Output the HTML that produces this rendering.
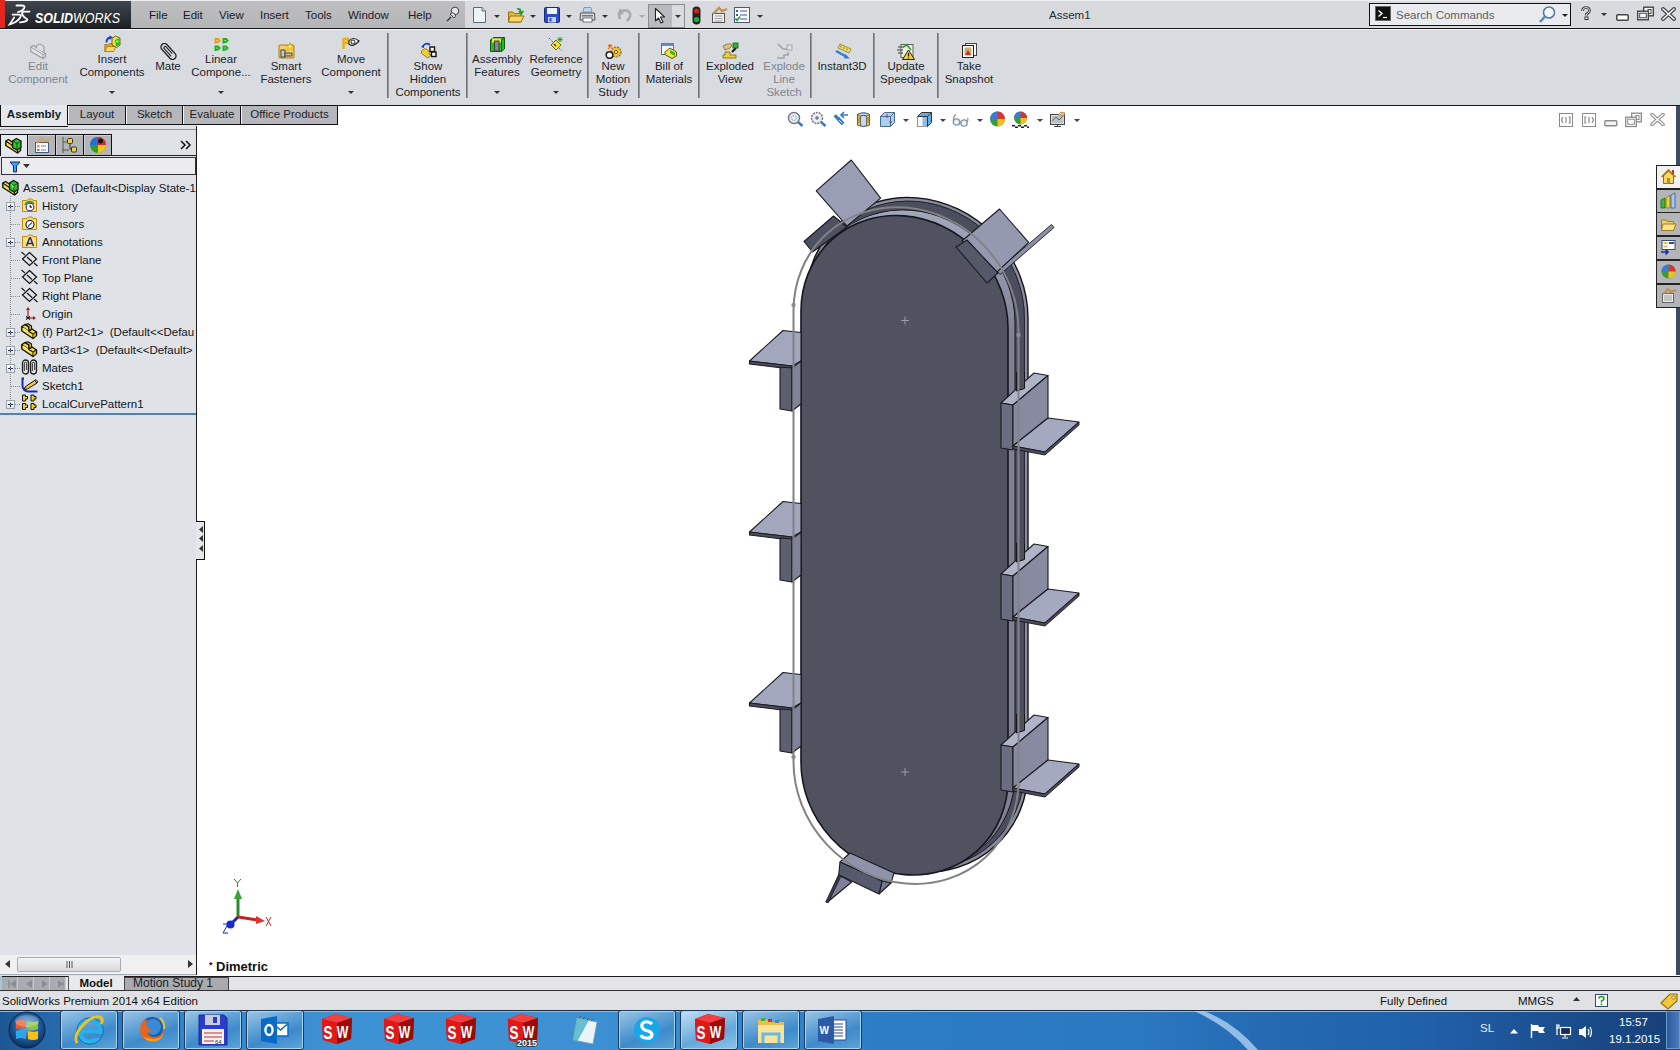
<!DOCTYPE html><html><head><meta charset="utf-8"><style>
html,body{margin:0;padding:0;}
body{width:1680px;height:1050px;position:relative;overflow:hidden;background:#d8dce1;font-family:"Liberation Sans",sans-serif;}
.b{position:absolute;}
.t{position:absolute;white-space:nowrap;line-height:14px;font-family:"Liberation Sans",sans-serif;}
</style></head><body>
<div class="b" style="left:0px;top:125px;width:197px;height:851px;background:#dfe3e8"></div>
<div class="b" style="left:197px;top:106px;width:1479px;height:870px;background:#ffffff"></div>
<div class="b" style="left:1676px;top:106px;width:4px;height:871px;background:#3d4b62"></div>
<div class="b" style="left:0px;top:0px;width:1680px;height:28px;background:#d8dadd"></div>
<div class="b" style="left:0px;top:0px;width:1680px;height:1px;background:#eff0f4"></div>
<div class="b" style="left:0px;top:27px;width:1680px;height:1px;background:#dcdde1"></div>
<div class="b" style="left:131px;top:1px;width:334px;height:27px;background:linear-gradient(#bfbfc1,#b4b5b7)"></div>
<div class="b" style="left:0px;top:0px;width:5px;height:28px;background:#e3261f"></div>
<div class="b" style="left:5px;top:1px;width:126px;height:27px;background:linear-gradient(#3f464e,#1e2226)"></div>
<div class="b" style="left:0px;top:28px;width:1680px;height:1px;background:#141414"></div>
<div class="b" style="left:0px;top:29px;width:1680px;height:1px;background:#f4f5f6"></div>
<div class="t" style="left:149px;top:8.02px;font-size:11.5px;color:#1a1a2a;font-weight:normal;">File</div>
<div class="t" style="left:183px;top:8.02px;font-size:11.5px;color:#1a1a2a;font-weight:normal;">Edit</div>
<div class="t" style="left:219px;top:8.02px;font-size:11.5px;color:#1a1a2a;font-weight:normal;">View</div>
<div class="t" style="left:260px;top:8.02px;font-size:11.5px;color:#1a1a2a;font-weight:normal;">Insert</div>
<div class="t" style="left:305px;top:8.02px;font-size:11.5px;color:#1a1a2a;font-weight:normal;">Tools</div>
<div class="t" style="left:348px;top:8.02px;font-size:11.5px;color:#1a1a2a;font-weight:normal;">Window</div>
<div class="t" style="left:408px;top:8.02px;font-size:11.5px;color:#1a1a2a;font-weight:normal;">Help</div>
<div class="t" style="left:1049px;top:8.02px;font-size:11.5px;color:#2a2a35;font-weight:normal;">Assem1</div>
<div class="b" style="left:1369px;top:3px;width:202px;height:23px;background:#e9ebee;border:1px solid #111;box-sizing:border-box"></div>
<div class="b" style="left:1375px;top:6px;width:16px;height:15px;background:#111;border:1px solid #666;box-sizing:border-box"></div>
<svg class="b" style="left:1377px;top:9px;" width="12" height="10" viewBox="0 0 12 10"><path d="M1.5 1.5L5 4.5L1.5 7.5" stroke="#fff" stroke-width="1.4" fill="none"/><path d="M6 8.5H10" stroke="#fff" stroke-width="1.2"/></svg>
<div class="t" style="left:1396px;top:8.02px;font-size:11.5px;color:#5b606b;font-weight:normal;">Search Commands</div>
<div class="b" style="left:0px;top:30px;width:1680px;height:75px;background:#d8dce1"></div>
<div class="t" style="left:-62px;width:200px;text-align:center;top:59.02px;font-size:11.5px;color:#80848c;font-weight:normal;">Edit</div>
<div class="t" style="left:-62px;width:200px;text-align:center;top:72.02px;font-size:11.5px;color:#80848c;font-weight:normal;">Component</div>
<div class="t" style="left:12px;width:200px;text-align:center;top:52.02px;font-size:11.5px;color:#1c1e2c;font-weight:normal;">Insert</div>
<div class="t" style="left:12px;width:200px;text-align:center;top:65.02px;font-size:11.5px;color:#1c1e2c;font-weight:normal;">Components</div>
<svg class="b" style="left:109px;top:91px;" width="6" height="3" viewBox="0 0 6 3"><path d="M0 0H6L3.0 3Z" fill="#333"/></svg>
<div class="t" style="left:68px;width:200px;text-align:center;top:59.02px;font-size:11.5px;color:#1c1e2c;font-weight:normal;">Mate</div>
<div class="t" style="left:121px;width:200px;text-align:center;top:52.02px;font-size:11.5px;color:#1c1e2c;font-weight:normal;">Linear</div>
<div class="t" style="left:121px;width:200px;text-align:center;top:65.02px;font-size:11.5px;color:#1c1e2c;font-weight:normal;">Compone...</div>
<svg class="b" style="left:218px;top:91px;" width="6" height="3" viewBox="0 0 6 3"><path d="M0 0H6L3.0 3Z" fill="#333"/></svg>
<div class="t" style="left:186px;width:200px;text-align:center;top:59.02px;font-size:11.5px;color:#1c1e2c;font-weight:normal;">Smart</div>
<div class="t" style="left:186px;width:200px;text-align:center;top:72.02px;font-size:11.5px;color:#1c1e2c;font-weight:normal;">Fasteners</div>
<div class="t" style="left:251px;width:200px;text-align:center;top:52.02px;font-size:11.5px;color:#1c1e2c;font-weight:normal;">Move</div>
<div class="t" style="left:251px;width:200px;text-align:center;top:65.02px;font-size:11.5px;color:#1c1e2c;font-weight:normal;">Component</div>
<svg class="b" style="left:348px;top:91px;" width="6" height="3" viewBox="0 0 6 3"><path d="M0 0H6L3.0 3Z" fill="#333"/></svg>
<div class="t" style="left:328px;width:200px;text-align:center;top:59.02px;font-size:11.5px;color:#1c1e2c;font-weight:normal;">Show</div>
<div class="t" style="left:328px;width:200px;text-align:center;top:72.02px;font-size:11.5px;color:#1c1e2c;font-weight:normal;">Hidden</div>
<div class="t" style="left:328px;width:200px;text-align:center;top:85.02px;font-size:11.5px;color:#1c1e2c;font-weight:normal;">Components</div>
<div class="t" style="left:397px;width:200px;text-align:center;top:52.02px;font-size:11.5px;color:#1c1e2c;font-weight:normal;">Assembly</div>
<div class="t" style="left:397px;width:200px;text-align:center;top:65.02px;font-size:11.5px;color:#1c1e2c;font-weight:normal;">Features</div>
<svg class="b" style="left:494px;top:91px;" width="6" height="3" viewBox="0 0 6 3"><path d="M0 0H6L3.0 3Z" fill="#333"/></svg>
<div class="t" style="left:456px;width:200px;text-align:center;top:52.02px;font-size:11.5px;color:#1c1e2c;font-weight:normal;">Reference</div>
<div class="t" style="left:456px;width:200px;text-align:center;top:65.02px;font-size:11.5px;color:#1c1e2c;font-weight:normal;">Geometry</div>
<svg class="b" style="left:553px;top:91px;" width="6" height="3" viewBox="0 0 6 3"><path d="M0 0H6L3.0 3Z" fill="#333"/></svg>
<div class="t" style="left:513px;width:200px;text-align:center;top:59.02px;font-size:11.5px;color:#1c1e2c;font-weight:normal;">New</div>
<div class="t" style="left:513px;width:200px;text-align:center;top:72.02px;font-size:11.5px;color:#1c1e2c;font-weight:normal;">Motion</div>
<div class="t" style="left:513px;width:200px;text-align:center;top:85.02px;font-size:11.5px;color:#1c1e2c;font-weight:normal;">Study</div>
<div class="t" style="left:569px;width:200px;text-align:center;top:59.02px;font-size:11.5px;color:#1c1e2c;font-weight:normal;">Bill of</div>
<div class="t" style="left:569px;width:200px;text-align:center;top:72.02px;font-size:11.5px;color:#1c1e2c;font-weight:normal;">Materials</div>
<div class="t" style="left:630px;width:200px;text-align:center;top:59.02px;font-size:11.5px;color:#1c1e2c;font-weight:normal;">Exploded</div>
<div class="t" style="left:630px;width:200px;text-align:center;top:72.02px;font-size:11.5px;color:#1c1e2c;font-weight:normal;">View</div>
<div class="t" style="left:684px;width:200px;text-align:center;top:59.02px;font-size:11.5px;color:#80848c;font-weight:normal;">Explode</div>
<div class="t" style="left:684px;width:200px;text-align:center;top:72.02px;font-size:11.5px;color:#80848c;font-weight:normal;">Line</div>
<div class="t" style="left:684px;width:200px;text-align:center;top:85.02px;font-size:11.5px;color:#80848c;font-weight:normal;">Sketch</div>
<div class="t" style="left:742px;width:200px;text-align:center;top:59.02px;font-size:11.5px;color:#1c1e2c;font-weight:normal;">Instant3D</div>
<div class="t" style="left:806px;width:200px;text-align:center;top:59.02px;font-size:11.5px;color:#1c1e2c;font-weight:normal;">Update</div>
<div class="t" style="left:806px;width:200px;text-align:center;top:72.02px;font-size:11.5px;color:#1c1e2c;font-weight:normal;">Speedpak</div>
<div class="t" style="left:869px;width:200px;text-align:center;top:59.02px;font-size:11.5px;color:#1c1e2c;font-weight:normal;">Take</div>
<div class="t" style="left:869px;width:200px;text-align:center;top:72.02px;font-size:11.5px;color:#1c1e2c;font-weight:normal;">Snapshot</div>
<div class="b" style="left:387px;top:33px;width:2px;height:65px;background:linear-gradient(90deg,#5c6066,#a9adb3)"></div>
<div class="b" style="left:466px;top:33px;width:2px;height:65px;background:linear-gradient(90deg,#5c6066,#a9adb3)"></div>
<div class="b" style="left:587px;top:33px;width:2px;height:65px;background:linear-gradient(90deg,#5c6066,#a9adb3)"></div>
<div class="b" style="left:638px;top:33px;width:2px;height:65px;background:linear-gradient(90deg,#5c6066,#a9adb3)"></div>
<div class="b" style="left:698px;top:33px;width:2px;height:65px;background:linear-gradient(90deg,#5c6066,#a9adb3)"></div>
<div class="b" style="left:810px;top:33px;width:2px;height:65px;background:linear-gradient(90deg,#5c6066,#a9adb3)"></div>
<div class="b" style="left:873px;top:33px;width:2px;height:65px;background:linear-gradient(90deg,#5c6066,#a9adb3)"></div>
<div class="b" style="left:937px;top:33px;width:2px;height:65px;background:linear-gradient(90deg,#5c6066,#a9adb3)"></div>
<div class="b" style="left:0px;top:105px;width:1680px;height:1px;background:#15161c"></div>
<div class="b" style="left:0px;top:105px;width:68px;height:22px;background:#e4e7eb;border-left:1px solid #111;border-bottom:1px solid #111;box-sizing:border-box"></div>
<div class="b" style="left:67px;top:105px;width:59px;height:20px;background:#b6b7bb;border:1px solid #111;box-sizing:border-box;box-shadow:inset 1px 0 0 #f4f4f4"></div>
<div class="t" style="left:-3.0px;width:200px;text-align:center;top:107.02px;font-size:11.5px;color:#1c1e2c;font-weight:normal;">Layout</div>
<div class="b" style="left:125px;top:105px;width:58px;height:20px;background:#b6b7bb;border:1px solid #111;box-sizing:border-box;box-shadow:inset 1px 0 0 #f4f4f4"></div>
<div class="t" style="left:54.5px;width:200px;text-align:center;top:107.02px;font-size:11.5px;color:#1c1e2c;font-weight:normal;">Sketch</div>
<div class="b" style="left:182px;top:105px;width:59px;height:20px;background:#b6b7bb;border:1px solid #111;box-sizing:border-box;box-shadow:inset 1px 0 0 #f4f4f4"></div>
<div class="t" style="left:112.0px;width:200px;text-align:center;top:107.02px;font-size:11.5px;color:#1c1e2c;font-weight:normal;">Evaluate</div>
<div class="b" style="left:240px;top:105px;width:98px;height:20px;background:#b6b7bb;border:1px solid #111;box-sizing:border-box;box-shadow:inset 1px 0 0 #f4f4f4"></div>
<div class="t" style="left:189.5px;width:200px;text-align:center;top:107.02px;font-size:11.5px;color:#1c1e2c;font-weight:normal;">Office Products</div>
<div class="t" style="left:-66px;width:200px;text-align:center;top:107.02px;font-size:11.5px;color:#111827;font-weight:bold;">Assembly</div>
<div class="b" style="left:0px;top:975px;width:1680px;height:16px;background:#dfe2e6"></div>
<div class="b" style="left:0px;top:991px;width:1680px;height:19px;background:#dde0e4"></div>
<div class="b" style="left:0px;top:1010px;width:1680px;height:40px;background:linear-gradient(90deg,#1a5b9a,#2a74bb 40%,#2068ae 70%,#1c5a9c)"></div>
<div class="b" style="left:196px;top:126px;width:1px;height:850px;background:#1a1a1a"></div>
<div class="b" style="left:0px;top:129px;width:196px;height:1px;background:#8e96a2"></div>
<div class="b" style="left:0px;top:134px;width:28px;height:22px;background:#e5e8ec;border-left:1px solid #111;border-top:1px solid #111;border-right:1px solid #111;box-sizing:border-box"></div>
<div class="b" style="left:27px;top:134px;width:29px;height:22px;background:#b3b5b9;border:1px solid #111;box-sizing:border-box;box-shadow:inset 1px 1px 0 #cfd1d4"></div>
<div class="b" style="left:55px;top:134px;width:29px;height:22px;background:#b3b5b9;border:1px solid #111;box-sizing:border-box;box-shadow:inset 1px 1px 0 #cfd1d4"></div>
<div class="b" style="left:83px;top:134px;width:29px;height:22px;background:#b3b5b9;border:1px solid #111;box-sizing:border-box;box-shadow:inset 1px 1px 0 #cfd1d4"></div>
<div class="b" style="left:111px;top:155px;width:85px;height:1px;background:#222"></div>
<div class="b" style="left:27px;top:155px;width:1px;height:1px;background:#222"></div>
<svg class="b" style="left:180px;top:140px;" width="12" height="10" viewBox="0 0 12 10"><path d="M1 1L5 5L1 9M6 1L10 5L6 9" stroke="#111" stroke-width="1.5" fill="none"/></svg>
<div class="b" style="left:1px;top:157px;width:195px;height:18px;background:#ececee;border:1px solid #333;box-sizing:border-box"></div>
<svg class="b" style="left:9px;top:161px;" width="12" height="12" viewBox="0 0 12 12"><path d="M1 1H11L7.5 5V11H4.5V5Z" fill="#3fa0ec" stroke="#0c2a8a" stroke-width="1"/></svg>
<svg class="b" style="left:23px;top:164px;" width="8" height="5" viewBox="0 0 8 5"><path d="M0 0H7L3.5 4Z" fill="#333"/></svg>
<div class="b" style="left:0px;top:176px;width:196px;height:779px;background:#dfe3e8"></div>
<div class="t" style="left:23px;top:181.02px;font-size:11.5px;color:#111420;font-weight:normal;width:173px;overflow:hidden">Assem1&nbsp; (Default&lt;Display State-1</div>
<svg class="b" style="left:2px;top:179px;" width="17" height="17" viewBox="0 0 17 17"><path d="M0.8 4L3.5 2.5L15.5 10.5V13.5L12.5 16L0.8 8.5Z" fill="#f6e040" stroke="#111" stroke-width="1.4" stroke-linejoin="round"/><path d="M0.8 4L12.5 12V16" stroke="#111" stroke-width="1.1" fill="none"/><path d="M7.5 4L11.5 1.5L16 4V10.5L12 13L7.5 10.5Z" fill="#2ec42e" stroke="#111" stroke-width="1.3" stroke-linejoin="round"/><path d="M7.5 4L12 6.5L16 4M12 6.5V13" stroke="#0a4a0a" stroke-width="0.9" fill="none"/><path d="M9 5.5L11 6.8V9" stroke="#9af09a" stroke-width="1" fill="none"/></svg>
<div class="t" style="left:42px;top:199.02px;font-size:11.5px;color:#111420;font-weight:normal;width:154px;overflow:hidden">History</div>
<div class="b" style="left:6px;top:202px;width:9px;height:9px;background:linear-gradient(#fff,#dfe2e6);border:1px solid #9aa0a8;box-sizing:border-box"></div>
<svg class="b" style="left:6px;top:202px;" width="9" height="9" viewBox="0 0 9 9"><path d="M2 4.5H7M4.5 2V7" stroke="#1b2a6a" stroke-width="1"/></svg>
<div class="b" style="left:15px;top:206px;width:6px;height:1px;background:repeating-linear-gradient(90deg,#8a8f96 0 1px,transparent 1px 2px)"></div>
<div class="t" style="left:42px;top:217.02px;font-size:11.5px;color:#111420;font-weight:normal;width:154px;overflow:hidden">Sensors</div>
<div class="b" style="left:11px;top:224px;width:10px;height:1px;background:repeating-linear-gradient(90deg,#8a8f96 0 1px,transparent 1px 2px)"></div>
<div class="t" style="left:42px;top:235.02px;font-size:11.5px;color:#111420;font-weight:normal;width:154px;overflow:hidden">Annotations</div>
<div class="b" style="left:6px;top:238px;width:9px;height:9px;background:linear-gradient(#fff,#dfe2e6);border:1px solid #9aa0a8;box-sizing:border-box"></div>
<svg class="b" style="left:6px;top:238px;" width="9" height="9" viewBox="0 0 9 9"><path d="M2 4.5H7M4.5 2V7" stroke="#1b2a6a" stroke-width="1"/></svg>
<div class="b" style="left:15px;top:242px;width:6px;height:1px;background:repeating-linear-gradient(90deg,#8a8f96 0 1px,transparent 1px 2px)"></div>
<div class="t" style="left:42px;top:253.02px;font-size:11.5px;color:#111420;font-weight:normal;width:154px;overflow:hidden">Front Plane</div>
<div class="b" style="left:11px;top:260px;width:10px;height:1px;background:repeating-linear-gradient(90deg,#8a8f96 0 1px,transparent 1px 2px)"></div>
<div class="t" style="left:42px;top:271.02px;font-size:11.5px;color:#111420;font-weight:normal;width:154px;overflow:hidden">Top Plane</div>
<div class="b" style="left:11px;top:278px;width:10px;height:1px;background:repeating-linear-gradient(90deg,#8a8f96 0 1px,transparent 1px 2px)"></div>
<div class="t" style="left:42px;top:289.02px;font-size:11.5px;color:#111420;font-weight:normal;width:154px;overflow:hidden">Right Plane</div>
<div class="b" style="left:11px;top:296px;width:10px;height:1px;background:repeating-linear-gradient(90deg,#8a8f96 0 1px,transparent 1px 2px)"></div>
<div class="t" style="left:42px;top:307.02px;font-size:11.5px;color:#111420;font-weight:normal;width:154px;overflow:hidden">Origin</div>
<div class="b" style="left:11px;top:314px;width:10px;height:1px;background:repeating-linear-gradient(90deg,#8a8f96 0 1px,transparent 1px 2px)"></div>
<div class="t" style="left:42px;top:325.02px;font-size:11.5px;color:#111420;font-weight:normal;width:154px;overflow:hidden">(f) Part2&lt;1&gt;&nbsp; (Default&lt;&lt;Defau</div>
<div class="b" style="left:6px;top:328px;width:9px;height:9px;background:linear-gradient(#fff,#dfe2e6);border:1px solid #9aa0a8;box-sizing:border-box"></div>
<svg class="b" style="left:6px;top:328px;" width="9" height="9" viewBox="0 0 9 9"><path d="M2 4.5H7M4.5 2V7" stroke="#1b2a6a" stroke-width="1"/></svg>
<div class="b" style="left:15px;top:332px;width:6px;height:1px;background:repeating-linear-gradient(90deg,#8a8f96 0 1px,transparent 1px 2px)"></div>
<div class="t" style="left:42px;top:343.02px;font-size:11.5px;color:#111420;font-weight:normal;width:154px;overflow:hidden">Part3&lt;1&gt;&nbsp; (Default&lt;&lt;Default&gt;</div>
<div class="b" style="left:6px;top:346px;width:9px;height:9px;background:linear-gradient(#fff,#dfe2e6);border:1px solid #9aa0a8;box-sizing:border-box"></div>
<svg class="b" style="left:6px;top:346px;" width="9" height="9" viewBox="0 0 9 9"><path d="M2 4.5H7M4.5 2V7" stroke="#1b2a6a" stroke-width="1"/></svg>
<div class="b" style="left:15px;top:350px;width:6px;height:1px;background:repeating-linear-gradient(90deg,#8a8f96 0 1px,transparent 1px 2px)"></div>
<div class="t" style="left:42px;top:361.02px;font-size:11.5px;color:#111420;font-weight:normal;width:154px;overflow:hidden">Mates</div>
<div class="b" style="left:6px;top:364px;width:9px;height:9px;background:linear-gradient(#fff,#dfe2e6);border:1px solid #9aa0a8;box-sizing:border-box"></div>
<svg class="b" style="left:6px;top:364px;" width="9" height="9" viewBox="0 0 9 9"><path d="M2 4.5H7M4.5 2V7" stroke="#1b2a6a" stroke-width="1"/></svg>
<div class="b" style="left:15px;top:368px;width:6px;height:1px;background:repeating-linear-gradient(90deg,#8a8f96 0 1px,transparent 1px 2px)"></div>
<div class="t" style="left:42px;top:379.02px;font-size:11.5px;color:#111420;font-weight:normal;width:154px;overflow:hidden">Sketch1</div>
<div class="b" style="left:11px;top:386px;width:10px;height:1px;background:repeating-linear-gradient(90deg,#8a8f96 0 1px,transparent 1px 2px)"></div>
<div class="t" style="left:42px;top:397.02px;font-size:11.5px;color:#111420;font-weight:normal;width:154px;overflow:hidden">LocalCurvePattern1</div>
<div class="b" style="left:6px;top:400px;width:9px;height:9px;background:linear-gradient(#fff,#dfe2e6);border:1px solid #9aa0a8;box-sizing:border-box"></div>
<svg class="b" style="left:6px;top:400px;" width="9" height="9" viewBox="0 0 9 9"><path d="M2 4.5H7M4.5 2V7" stroke="#1b2a6a" stroke-width="1"/></svg>
<div class="b" style="left:15px;top:404px;width:6px;height:1px;background:repeating-linear-gradient(90deg,#8a8f96 0 1px,transparent 1px 2px)"></div>
<div class="b" style="left:10px;top:196px;width:1px;height:209px;background:repeating-linear-gradient(#8a8f96 0 1px,transparent 1px 2px)"></div>
<svg class="b" style="left:21px;top:197px;" width="17" height="16" viewBox="0 0 17 16"><path d="M1.5 3.5H6L7.5 2H11L12 3.5H15.5V14.5H1.5Z" fill="#f6d865" stroke="#c08a14" stroke-width="1"/><rect x="2" y="5" width="13" height="9" fill="#fbe27a"/><path d="M4 8A5 5 0 0 1 13 7" stroke="#2aa02a" stroke-width="1.6" fill="none"/><circle cx="9" cy="10" r="3.8" fill="#fff" stroke="#3a3aa0" stroke-width="1.2"/><path d="M9 8V10.3H11" stroke="#c01818" stroke-width="1"/></svg>
<svg class="b" style="left:21px;top:215px;" width="17" height="16" viewBox="0 0 17 16"><path d="M1.5 3.5H6L7.5 2H11L12 3.5H15.5V14.5H1.5Z" fill="#f6d865" stroke="#c08a14" stroke-width="1"/><rect x="2" y="5" width="13" height="9" fill="#fbe27a"/><circle cx="9" cy="9.5" r="4" fill="#fff" stroke="#111" stroke-width="1.1"/><path d="M7 11.5L11 7.5" stroke="#2a5ad0" stroke-width="1.2"/></svg>
<svg class="b" style="left:21px;top:233px;" width="17" height="16" viewBox="0 0 17 16"><path d="M1.5 3.5H6L7.5 2H11L12 3.5H15.5V14.5H1.5Z" fill="#f6d865" stroke="#c08a14" stroke-width="1"/><rect x="2" y="5" width="13" height="9" fill="#fbe27a"/><path d="M5.5 13L8.5 5H9.5L12.5 13M6.7 10.5H11.3" stroke="#1a2a9a" stroke-width="1.5" fill="none"/></svg>
<svg class="b" style="left:21px;top:251px;" width="17" height="16" viewBox="0 0 17 16"><path d="M8.5 1.5L15.5 8L8.5 14.5L1.5 8Z" fill="none" stroke="#111" stroke-width="1.2"/><path d="M0.5 1L4 4.2M6 6L11 10.5M13 12L16.5 15" stroke="#111" stroke-width="1.1"/></svg>
<svg class="b" style="left:21px;top:269px;" width="17" height="16" viewBox="0 0 17 16"><path d="M8.5 1.5L15.5 8L8.5 14.5L1.5 8Z" fill="none" stroke="#111" stroke-width="1.2"/><path d="M0.5 1L4 4.2M6 6L11 10.5M13 12L16.5 15" stroke="#111" stroke-width="1.1"/></svg>
<svg class="b" style="left:21px;top:287px;" width="17" height="16" viewBox="0 0 17 16"><path d="M8.5 1.5L15.5 8L8.5 14.5L1.5 8Z" fill="none" stroke="#111" stroke-width="1.2"/><path d="M0.5 1L4 4.2M6 6L11 10.5M13 12L16.5 15" stroke="#111" stroke-width="1.1"/></svg>
<svg class="b" style="left:21px;top:305px;" width="17" height="16" viewBox="0 0 17 16"><path d="M7 14V3" stroke="#b01818" stroke-width="1.2"/><path d="M5 5L7 2L9 5Z" fill="#b01818"/><path d="M7 13H14" stroke="#b01818" stroke-width="1.2"/><path d="M12 11L15 13L12 15Z" fill="#b01818"/><path d="M5 11L9 15M9 11L5 15M5 13H9" stroke="#111" stroke-width="0.9"/></svg>
<svg class="b" style="left:21px;top:323px;" width="17" height="17" viewBox="0 0 17 17"><path d="M0.8 3.5L4 1.5L8 4V7.5L11 6L15.5 9V12.5L12 15.5L0.8 8Z" fill="#f6e040" stroke="#111" stroke-width="1.4" stroke-linejoin="round"/><path d="M0.8 3.5L8 8.5V7.5M8 8.5L12 11V15.5M12 11L15.5 9M4 1.5L8 4" stroke="#111" stroke-width="1.1" fill="none"/><path d="M4 1.5L7 0.8L10.5 3V6.5L8 7.5V4Z" fill="#e8c020" stroke="#111" stroke-width="1.1" stroke-linejoin="round"/><path d="M2 5L7 8.5" stroke="#fff8a0" stroke-width="1.1"/><path d="M12.5 11.5V14.5L15 12.5V10Z" fill="#d8b010"/></svg>
<svg class="b" style="left:21px;top:341px;" width="17" height="17" viewBox="0 0 17 17"><path d="M0.8 3.5L4 1.5L8 4V7.5L11 6L15.5 9V12.5L12 15.5L0.8 8Z" fill="#f6e040" stroke="#111" stroke-width="1.4" stroke-linejoin="round"/><path d="M0.8 3.5L8 8.5V7.5M8 8.5L12 11V15.5M12 11L15.5 9M4 1.5L8 4" stroke="#111" stroke-width="1.1" fill="none"/><path d="M4 1.5L7 0.8L10.5 3V6.5L8 7.5V4Z" fill="#e8c020" stroke="#111" stroke-width="1.1" stroke-linejoin="round"/><path d="M2 5L7 8.5" stroke="#fff8a0" stroke-width="1.1"/><path d="M12.5 11.5V14.5L15 12.5V10Z" fill="#d8b010"/></svg>
<svg class="b" style="left:21px;top:359px;" width="17" height="16" viewBox="0 0 17 16"><rect x="1.5" y="1" width="6" height="14" rx="3" fill="none" stroke="#222" stroke-width="1.3"/><path d="M3.3 12V4.5A1.2 1.2 0 0 1 5.7 4.5V11" stroke="#222" stroke-width="1" fill="none"/><rect x="9.5" y="1" width="6" height="14" rx="3" fill="none" stroke="#222" stroke-width="1.3"/><path d="M11.3 12V4.5A1.2 1.2 0 0 1 13.7 4.5V11" stroke="#222" stroke-width="1" fill="none"/></svg>
<svg class="b" style="left:21px;top:376px;" width="18" height="17" viewBox="0 0 18 17"><path d="M3 2.5H1.5V10A5.5 5.5 0 0 0 7 15.5H16.5" stroke="#1b2ab0" stroke-width="2" fill="none"/><path d="M4 11L13.5 4.5L16 7L6.5 13L3.5 13.5Z" fill="#f2c53a" stroke="#111" stroke-width="1"/><path d="M13.5 4.5L15 3.5L17 6L16 7Z" fill="#e08080" stroke="#111" stroke-width="0.8"/></svg>
<svg class="b" style="left:21px;top:394px;" width="17" height="18" viewBox="0 0 17 18"><g fill="#f2d020" stroke="#111" stroke-width="1"><path d="M1.5 1H4.5V2.5H6.5V5H4.5V7H1.5Z"/><path d="M10 1H13V2.5H15V5H13V7H10Z"/><path d="M1.5 9.5H4.5V11H6.5V13.5H4.5V15.5H1.5Z"/><path d="M10 9.5H13V11H15V13.5H13V15.5H10Z"/></g></svg>
<div class="b" style="left:0px;top:413px;width:196px;height:2px;background:#4a82c6"></div>
<div class="b" style="left:0px;top:955px;width:196px;height:19px;background:#f0f0f1"></div>
<div class="b" style="left:17px;top:957px;width:104px;height:15px;background:linear-gradient(#f4f4f4,#d9dadc);border:1px solid #a8abb0;border-radius:2px;box-sizing:border-box"></div>
<svg class="b" style="left:66px;top:961px;" width="7" height="7" viewBox="0 0 7 7"><path d="M1 0V7M3.5 0V7M6 0V7" stroke="#555" stroke-width="1"/></svg>
<svg class="b" style="left:5px;top:960px;" width="5" height="8" viewBox="0 0 5 8"><path d="M5 0V8L0 4Z" fill="#333"/></svg>
<svg class="b" style="left:188px;top:960px;" width="5" height="8" viewBox="0 0 5 8"><path d="M0 0V8L5 4Z" fill="#333"/></svg>
<div class="b" style="left:196px;top:521px;width:9px;height:39px;background:#e4e7eb;border:1px solid #111;border-left:none;box-sizing:border-box"></div>
<svg class="b" style="left:199px;top:526px;" width="4" height="7" viewBox="0 0 4 7"><path d="M4 0V7L0 3.5Z" fill="#333"/></svg>
<svg class="b" style="left:199px;top:535px;" width="4" height="7" viewBox="0 0 4 7"><path d="M4 0V7L0 3.5Z" fill="#333"/></svg>
<svg class="b" style="left:199px;top:545px;" width="4" height="7" viewBox="0 0 4 7"><path d="M4 0V7L0 3.5Z" fill="#333"/></svg>
<svg class="b" style="left:700px;top:140px;" width="420" height="780" viewBox="0 0 420 780"><g transform="translate(-700,-140)"><defs><linearGradient id="lb" gradientUnits="userSpaceOnUse" x1="0" y1="205" x2="0" y2="330"><stop offset="0" stop-color="#a4a8bd"/><stop offset="1" stop-color="#7d8193"/></linearGradient></defs><g transform="translate(904.5,0) skewY(4.716) translate(-904.5,0)"><path d="M806.0 307.8A111 111 0 0 1 1028.0 307.8L1028.0 759.7A111 111 0 0 1 806.0 759.7Z" fill="#4b4e5e" stroke="#15151c" stroke-width="1.4"/><path d="M808.0 307.8A109 109 0 0 1 1026.0 307.8L1026.0 759.7A109 109 0 0 1 808.0 759.7Z" fill="none" stroke="#8a8c9a" stroke-width="2.4"/><path d="M809.6 307.8A107.4 107.4 0 0 1 1024.4 307.8L1024.4 759.7A107.4 107.4 0 0 1 809.6 759.7Z" fill="none" stroke="#1e1f28" stroke-width="0.9"/><path d="M808.0 313.2A103.5 103.5 0 0 1 1015.0 313.2L1015.0 765.1A103.5 103.5 0 0 1 808.0 765.1Z" fill="url(#lb)" stroke="#15151c" stroke-width="1"/><path d="M807.0 314.07142857142856A103.5 103.5 0 0 1 1014.0 314.07142857142856L1014.0 765.9714285714286A103.5 103.5 0 0 1 807.0 765.9714285714286Z" fill="url(#lb)" stroke="none" stroke-width="1"/><path d="M806.0 314.9428571428572A103.5 103.5 0 0 1 1013.0 314.9428571428572L1013.0 766.8428571428572A103.5 103.5 0 0 1 806.0 766.8428571428572Z" fill="url(#lb)" stroke="none" stroke-width="1"/><path d="M805.0 315.81428571428575A103.5 103.5 0 0 1 1012.0 315.81428571428575L1012.0 767.7142857142858A103.5 103.5 0 0 1 805.0 767.7142857142858Z" fill="url(#lb)" stroke="none" stroke-width="1"/><path d="M804.0 316.6857142857143A103.5 103.5 0 0 1 1011.0 316.6857142857143L1011.0 768.5857142857143A103.5 103.5 0 0 1 804.0 768.5857142857143Z" fill="url(#lb)" stroke="none" stroke-width="1"/><path d="M803.0 317.5571428571429A103.5 103.5 0 0 1 1010.0 317.5571428571429L1010.0 769.4571428571429A103.5 103.5 0 0 1 803.0 769.4571428571429Z" fill="url(#lb)" stroke="none" stroke-width="1"/><path d="M802.0 318.42857142857144A103.5 103.5 0 0 1 1009.0 318.42857142857144L1009.0 770.3285714285714A103.5 103.5 0 0 1 802.0 770.3285714285714Z" fill="url(#lb)" stroke="none" stroke-width="1"/><path d="M801.0 319.3A103.5 103.5 0 0 1 1008.0 319.3L1008.0 771.2A103.5 103.5 0 0 1 801.0 771.2Z" fill="#50535f" stroke="#15151c" stroke-width="1.6"/></g><path d="M901.0 320.5H909.0M905.0 316.5V324.5" stroke="#9a9ca8" stroke-width="1"/><path d="M901.0 772.0H909.0M905.0 768.0V776.0" stroke="#9a9ca8" stroke-width="1"/><path d="M749.5 361 L783 330.5 L801 332.5 L801 361 L792 366Z" fill="#a3a7be" stroke="#1a1a22" stroke-width="1.1" stroke-linejoin="round"/><path d="M749.5 361 L792 366 L792 369 L782 368 L749.5 364Z" fill="#4a4d5a" stroke="#1a1a22" stroke-width="1.1" stroke-linejoin="round"/><path d="M780 367 L792 368 L792 411 L780 409Z" fill="#5c5f6e" stroke="#1a1a22" stroke-width="1.1" stroke-linejoin="round"/><path d="M792 368 L801 361 L801 404 L792 411Z" fill="#7f8398" stroke="#1a1a22" stroke-width="1.1" stroke-linejoin="round"/><path d="M749.5 532 L783 501.5 L801 503.5 L801 532 L792 537Z" fill="#a3a7be" stroke="#1a1a22" stroke-width="1.1" stroke-linejoin="round"/><path d="M749.5 532 L792 537 L792 540 L782 539 L749.5 535Z" fill="#4a4d5a" stroke="#1a1a22" stroke-width="1.1" stroke-linejoin="round"/><path d="M780 538 L792 539 L792 582 L780 580Z" fill="#5c5f6e" stroke="#1a1a22" stroke-width="1.1" stroke-linejoin="round"/><path d="M792 539 L801 532 L801 575 L792 582Z" fill="#7f8398" stroke="#1a1a22" stroke-width="1.1" stroke-linejoin="round"/><path d="M749.5 703 L783 672.5 L801 674.5 L801 703 L792 708Z" fill="#a3a7be" stroke="#1a1a22" stroke-width="1.1" stroke-linejoin="round"/><path d="M749.5 703 L792 708 L792 711 L782 710 L749.5 706Z" fill="#4a4d5a" stroke="#1a1a22" stroke-width="1.1" stroke-linejoin="round"/><path d="M780 709 L792 710 L792 753 L780 751Z" fill="#5c5f6e" stroke="#1a1a22" stroke-width="1.1" stroke-linejoin="round"/><path d="M792 710 L801 703 L801 746 L792 753Z" fill="#7f8398" stroke="#1a1a22" stroke-width="1.1" stroke-linejoin="round"/><path d="M1001 403 L1034 373 L1048 375.5 L1013 405Z" fill="#b0b4c8" stroke="#1a1a22" stroke-width="1.1" stroke-linejoin="round"/><path d="M1001 403 L1013 405 L1013 450 L1001 448Z" fill="#6a6d7f" stroke="#1a1a22" stroke-width="1.1" stroke-linejoin="round"/><path d="M1013 405 L1048 375.5 L1048 418 L1019 441 L1013 446Z" fill="#878aa0" stroke="#1a1a22" stroke-width="1.1" stroke-linejoin="round"/><path d="M1013 446 L1048 418 L1079 422 L1045 452Z" fill="#a5a9c0" stroke="#1a1a22" stroke-width="1.1" stroke-linejoin="round"/><path d="M1013 446 L1045 452 L1079 422 L1079 425 L1045 455 L1013 449Z" fill="#4a4d5a" stroke="#1a1a22" stroke-width="0.9" stroke-linejoin="round"/><path d="M1017 372V391L1024.5 388.5V372Z" fill="#4e505c"/><path d="M1016.5 372V391L1024.5 388.5V372" fill="none" stroke="#15151c" stroke-width="1"/><path d="M1001 574 L1034 544 L1048 546.5 L1013 576Z" fill="#b0b4c8" stroke="#1a1a22" stroke-width="1.1" stroke-linejoin="round"/><path d="M1001 574 L1013 576 L1013 621 L1001 619Z" fill="#6a6d7f" stroke="#1a1a22" stroke-width="1.1" stroke-linejoin="round"/><path d="M1013 576 L1048 546.5 L1048 589 L1019 612 L1013 617Z" fill="#878aa0" stroke="#1a1a22" stroke-width="1.1" stroke-linejoin="round"/><path d="M1013 617 L1048 589 L1079 593 L1045 623Z" fill="#a5a9c0" stroke="#1a1a22" stroke-width="1.1" stroke-linejoin="round"/><path d="M1013 617 L1045 623 L1079 593 L1079 596 L1045 626 L1013 620Z" fill="#4a4d5a" stroke="#1a1a22" stroke-width="0.9" stroke-linejoin="round"/><path d="M1017 543V562L1024.5 559.5V543Z" fill="#4e505c"/><path d="M1016.5 543V562L1024.5 559.5V543" fill="none" stroke="#15151c" stroke-width="1"/><path d="M1001 745 L1034 715 L1048 717.5 L1013 747Z" fill="#b0b4c8" stroke="#1a1a22" stroke-width="1.1" stroke-linejoin="round"/><path d="M1001 745 L1013 747 L1013 792 L1001 790Z" fill="#6a6d7f" stroke="#1a1a22" stroke-width="1.1" stroke-linejoin="round"/><path d="M1013 747 L1048 717.5 L1048 760 L1019 783 L1013 788Z" fill="#878aa0" stroke="#1a1a22" stroke-width="1.1" stroke-linejoin="round"/><path d="M1013 788 L1048 760 L1079 764 L1045 794Z" fill="#a5a9c0" stroke="#1a1a22" stroke-width="1.1" stroke-linejoin="round"/><path d="M1013 788 L1045 794 L1079 764 L1079 767 L1045 797 L1013 791Z" fill="#4a4d5a" stroke="#1a1a22" stroke-width="0.9" stroke-linejoin="round"/><path d="M1017 714V733L1024.5 730.5V714Z" fill="#4e505c"/><path d="M1016.5 714V733L1024.5 730.5V714" fill="none" stroke="#15151c" stroke-width="1"/><path d="M804 241.5 L833.5 216 L847 227 L812.5 252Z" fill="#4e5161" stroke="#1a1a22" stroke-width="1.1" stroke-linejoin="round"/><path d="M851.3 160 L880.6 198.2 L847 226 L816.2 190.9Z" fill="#9a9eb5" stroke="#1a1a22" stroke-width="1.1" stroke-linejoin="round"/><path d="M997 271 L1051.5 224.5 L1054 227.5 L1000 274.5Z" fill="#8c90a6" stroke="#1a1a22" stroke-width="0.9" stroke-linejoin="round"/><path d="M962 241 L999.5 209 L1028.6 242.4 L997 272Z" fill="#9499b0" stroke="#1a1a22" stroke-width="1.1" stroke-linejoin="round"/><path d="M956 247 L967 240 L998 273 L987 283Z" fill="#555868" stroke="#1a1a22" stroke-width="1.1" stroke-linejoin="round"/><path d="M840 862 L850 853 L894 873 L891 883 L882 881Z" fill="#8f93aa" stroke="#1a1a22" stroke-width="1.1" stroke-linejoin="round"/><path d="M882 881 L891 883 L879 894Z" fill="#73778c" stroke="#1a1a22" stroke-width="1.1" stroke-linejoin="round"/><path d="M840 862 L882 881 L879 894 L838.7 874.7Z" fill="#575a6c" stroke="#1a1a22" stroke-width="1.1" stroke-linejoin="round"/><path d="M838.7 875 L851.7 882 L827 902.5Z" fill="#7d8197" stroke="#1a1a22" stroke-width="1.1" stroke-linejoin="round"/><path d="M838.7 874.7 L841 876 L828.3 902.7 L825.7 902Z" fill="#3a3c48" stroke="#1a1a22" stroke-width="0.8" stroke-linejoin="round"/><path d="M793.5 320A112.5 112.5 0 0 1 1018.5 320L1018.5 771A112.5 112.5 0 0 1 793.5 771Z" fill="none" stroke="#828285" stroke-width="2" transform="translate(904.5,0) skewY(4.716) translate(-904.5,0)"/><circle cx="793.5" cy="305" r="2.2" fill="#8c8c8c"/><circle cx="793.5" cy="757" r="2.2" fill="#8c8c8c"/><circle cx="1018.5" cy="335" r="2.2" fill="#8c8c8c"/><circle cx="1018.5" cy="785" r="2.2" fill="#8c8c8c"/></g></svg>
<svg class="b" style="left:787px;top:111px;" width="17" height="16" viewBox="0 0 17 16"><circle cx="7" cy="7" r="5.5" fill="#e8ecf0" stroke="#6f7780" stroke-width="1.4"/><path d="M11 11L15.5 15" stroke="#3a7ac8" stroke-width="2.4"/><circle cx="7" cy="7" r="2.5" fill="none" stroke="#8a9099" stroke-dasharray="1.5 1"/></svg>
<svg class="b" style="left:810px;top:111px;" width="17" height="16" viewBox="0 0 17 16"><circle cx="7" cy="7" r="5.5" fill="#e8ecf0" stroke="#6f7780" stroke-width="1.4" stroke-dasharray="2 1"/><path d="M11 11L15.5 15" stroke="#3a7ac8" stroke-width="2.4"/><path d="M5 7H9M7 5V9" stroke="#555" stroke-width="1"/></svg>
<svg class="b" style="left:833px;top:111px;" width="17" height="16" viewBox="0 0 17 16"><path d="M2 4L10 13" stroke="#3a7ac8" stroke-width="4"/><path d="M3 3L6 6M6 9L9 12" stroke="#d8e8f8" stroke-width="1"/><path d="M8 4H15M11 1L8 4L11 7" stroke="#3a7ac8" stroke-width="1.6" fill="none"/></svg>
<svg class="b" style="left:856px;top:111px;" width="17" height="16" viewBox="0 0 17 16"><path d="M1.5 3.5Q7.5 0 13.5 3.5V14Q7.5 17 1.5 14Z" fill="#c8d8ec" stroke="#444" stroke-width="1"/><path d="M1.5 3.5V14L4.5 15V5Z" fill="#f0d030" stroke="#555" stroke-width="0.8"/><path d="M13.5 3.5V14L10.5 15V5Z" fill="#f0d030" stroke="#555" stroke-width="0.8"/><path d="M2.5 6L3.5 7.5L2.5 9L3.5 10.5L2.5 12M12.5 6L11.5 7.5L12.5 9L11.5 10.5L12.5 12" stroke="#555" stroke-width="0.8" fill="none"/><path d="M4.5 5Q7.5 3.5 10.5 5" stroke="#444" fill="none"/></svg>
<svg class="b" style="left:879px;top:111px;" width="17" height="16" viewBox="0 0 17 16"><path d="M1.5 5.5L5.5 1.5H15.5V11.5L11.5 15.5H1.5Z" fill="#a8d0f0" stroke="#4a6a90" stroke-width="1"/><path d="M1.5 5.5H11.5V15.5M11.5 5.5L15.5 1.5" stroke="#4a6a90" stroke-width="1" fill="none"/><path d="M8 3V7M13 11H10" stroke="#d02020" stroke-width="1"/></svg>
<svg class="b" style="left:903px;top:119px;" width="6" height="3" viewBox="0 0 6 3"><path d="M0 0H6L3.0 3Z" fill="#444"/></svg>
<svg class="b" style="left:916px;top:111px;" width="17" height="16" viewBox="0 0 17 16"><path d="M1.5 5.5L5.5 1.5H15.5V11.5L11.5 15.5H1.5Z" fill="#6aa8e0" stroke="#333" stroke-width="1"/><path d="M1.5 5.5H11.5V15.5H1.5Z" fill="#f6f8fa"/><path d="M6.5 5.5H11.5V15.5H6.5Z" fill="#8cbce8"/><path d="M1.5 5.5H11.5V15.5M11.5 5.5L15.5 1.5" stroke="#333" stroke-width="1" fill="none"/></svg>
<svg class="b" style="left:940px;top:119px;" width="6" height="3" viewBox="0 0 6 3"><path d="M0 0H6L3.0 3Z" fill="#444"/></svg>
<svg class="b" style="left:952px;top:111px;" width="17" height="16" viewBox="0 0 17 16"><circle cx="4.5" cy="11" r="3.2" fill="#eef2f6" stroke="#8a9099" stroke-width="1.3"/><circle cx="12" cy="12" r="3.2" fill="#eef2f6" stroke="#8a9099" stroke-width="1.3"/><path d="M7.5 11.5Q8.5 10.5 9 11.5M1.5 10Q1 5 4 3.5M15 11Q16.5 9 15.5 7" stroke="#8a9099" stroke-width="1.2" fill="none"/></svg>
<svg class="b" style="left:977px;top:119px;" width="6" height="3" viewBox="0 0 6 3"><path d="M0 0H6L3.0 3Z" fill="#444"/></svg>
<svg class="b" style="left:989px;top:111px;" width="17" height="17" viewBox="0 0 17 17"><circle cx="8.5" cy="8" r="7.5" fill="#3a9a3a"/><path d="M8.5 8V0.5A7.5 7.5 0 0 1 16 8Z" fill="#e03030"/><path d="M8.5 8H1A7.5 7.5 0 0 1 8.5 0.5Z" fill="#3a7ad8"/><path d="M8.5 8H16A7.5 7.5 0 0 1 8.5 15.5Z" fill="#f0c020"/></svg>
<svg class="b" style="left:1012px;top:111px;" width="17" height="17" viewBox="0 0 17 17"><circle cx="8.5" cy="7" r="6.5" fill="#3a9a3a"/><path d="M8.5 7V0.5A6.5 6.5 0 0 1 15 7Z" fill="#e03030"/><path d="M8.5 7H2A6.5 6.5 0 0 1 8.5 0.5Z" fill="#3a7ad8"/><path d="M8.5 7H15A6.5 6.5 0 0 1 8.5 13.5Z" fill="#f0c020"/><path d="M0 14H17V17H0Z" fill="#fff"/><path d="M0 14H3V15.5H0ZM6 14H9V15.5H6ZM12 14H15V15.5H12ZM3 15.5H6V17H3ZM9 15.5H12V17H9ZM15 15.5H17V17H15Z" fill="#222"/></svg>
<svg class="b" style="left:1037px;top:119px;" width="6" height="3" viewBox="0 0 6 3"><path d="M0 0H6L3.0 3Z" fill="#444"/></svg>
<svg class="b" style="left:1049px;top:111px;" width="17" height="16" viewBox="0 0 17 16"><rect x="1.5" y="3.5" width="14" height="10" fill="#d8dce0" stroke="#444" stroke-width="1"/><rect x="3" y="5" width="11" height="7" fill="#b8c0c8"/><path d="M3 10L7 6L10 9L14 5" stroke="#666" stroke-width="1" fill="none"/><path d="M5 15.5H12M8.5 13.5V15.5" stroke="#444" stroke-width="1.2"/><path d="M9 4L12 1L16 2L15 5Z" fill="#e8c080" stroke="#8a6a30" stroke-width="0.6"/></svg>
<svg class="b" style="left:1074px;top:119px;" width="6" height="3" viewBox="0 0 6 3"><path d="M0 0H6L3.0 3Z" fill="#444"/></svg>
<svg class="b" style="left:1559px;top:113px;" width="14" height="14" viewBox="0 0 14 14"><rect x="0.5" y="0.5" width="13" height="13" fill="none" stroke="#8a8a8a"/><path d="M4 4L2.5 7L4 10M7 4V10M9.5 4H11V10H9.5" stroke="#8a8a8a" stroke-width="1.2" fill="none"/></svg>
<svg class="b" style="left:1582px;top:113px;" width="14" height="14" viewBox="0 0 14 14"><rect x="0.5" y="0.5" width="13" height="13" fill="none" stroke="#8a8a8a"/><path d="M4.5 4H3V10H4.5M7 4V10M10 4L11.5 7L10 10" stroke="#8a8a8a" stroke-width="1.2" fill="none"/></svg>
<svg class="b" style="left:1604px;top:120px;" width="14" height="7" viewBox="0 0 14 7"><rect x="0.8" y="0.8" width="12" height="5" rx="1" fill="#f4f4f4" stroke="#8a8a8a" stroke-width="1.4"/></svg>
<svg class="b" style="left:1625px;top:112px;" width="18" height="16" viewBox="0 0 18 16"><rect x="6.7" y="1.2" width="9.6" height="8.6" fill="#fff" stroke="#8a8a8a" stroke-width="1.3"/><rect x="11" y="3.5" width="3" height="4" fill="none" stroke="#8a8a8a" stroke-width="1"/><rect x="0.7" y="5.2" width="10.6" height="9.3" fill="#fff" stroke="#8a8a8a" stroke-width="1.3"/><rect x="2.7" y="7.2" width="6.6" height="5" fill="none" stroke="#8a8a8a" stroke-width="1"/></svg>
<svg class="b" style="left:1650px;top:113px;" width="15" height="13" viewBox="0 0 15 13"><path d="M2 1.5L13 11.5M13 1.5L2 11.5" stroke="#8a8a8a" stroke-width="3.6" stroke-linecap="round"/><path d="M2 1.5L13 11.5M13 1.5L2 11.5" stroke="#fff" stroke-width="1.4" stroke-linecap="round"/></svg>
<div class="b" style="left:1656px;top:165px;width:24px;height:24px;background:#f2f2f2;border:1px solid #222;border-right:none;box-sizing:border-box"></div>
<div class="b" style="left:1656px;top:189px;width:24px;height:24px;background:#b3b5b9;border:1px solid #222;border-right:none;box-sizing:border-box"></div>
<div class="b" style="left:1656px;top:212px;width:24px;height:24px;background:#b3b5b9;border:1px solid #222;border-right:none;box-sizing:border-box"></div>
<div class="b" style="left:1656px;top:236px;width:24px;height:24px;background:#b3b5b9;border:1px solid #222;border-right:none;box-sizing:border-box"></div>
<div class="b" style="left:1656px;top:260px;width:24px;height:24px;background:#b3b5b9;border:1px solid #222;border-right:none;box-sizing:border-box"></div>
<div class="b" style="left:1656px;top:284px;width:24px;height:24px;background:#b3b5b9;border:1px solid #222;border-right:none;box-sizing:border-box"></div>
<svg class="b" style="left:1660px;top:168px;" width="17" height="17" viewBox="0 0 17 17"><path d="M1.5 9L8.5 2L15.5 9" fill="none" stroke="#b07a10" stroke-width="1.6"/><path d="M3.5 8V15.5H13.5V8L8.5 3Z" fill="#f6d860" stroke="#9a6a10" stroke-width="1"/><rect x="7" y="10" width="3" height="5.5" fill="#c08a20"/><rect x="12" y="2" width="2" height="4" fill="#d03030"/></svg>
<svg class="b" style="left:1660px;top:192px;" width="17" height="17" viewBox="0 0 17 17"><path d="M1 8L5 6V16H1Z" fill="#3ab83a" stroke="#1a6a1a" stroke-width="0.8"/><path d="M6 6L10 3V16H6Z" fill="#f0d030" stroke="#8a7010" stroke-width="0.8"/><path d="M11 3L15 1V16H11Z" fill="#a8c8f0" stroke="#3a5a9a" stroke-width="0.8"/></svg>
<svg class="b" style="left:1660px;top:216px;" width="17" height="17" viewBox="0 0 17 17"><path d="M1.5 4H6L7.5 5.5H13.5V14.5H1.5Z" fill="#f2d060" stroke="#a87a18" stroke-width="1"/><path d="M3 8H16L13.5 14.5H1.5Z" fill="#fbe48a" stroke="#a87a18" stroke-width="1"/></svg>
<svg class="b" style="left:1660px;top:239px;" width="17" height="17" viewBox="0 0 17 17"><rect x="2" y="1.5" width="13" height="9" fill="#fff" stroke="#3a4a7a"/><rect x="3.5" y="3" width="4" height="2" fill="#e8c040"/><rect x="9" y="3" width="5" height="2" fill="#3a4a7a"/><rect x="3.5" y="6.5" width="4" height="2" fill="#e8c040"/><path d="M1 13H8M5.5 10.5L8 13L5.5 15.5" stroke="#1a2ab0" stroke-width="1.6" fill="none"/></svg>
<svg class="b" style="left:1660px;top:263px;" width="17" height="17" viewBox="0 0 17 17"><circle cx="8.5" cy="8.5" r="7" fill="#3a9a3a"/><path d="M8.5 8.5V1.5A7 7 0 0 1 15.5 8.5Z" fill="#e03030"/><path d="M8.5 8.5H1.5A7 7 0 0 1 8.5 1.5Z" fill="#3a7ad8"/><path d="M8.5 8.5H15.5A7 7 0 0 1 8.5 15.5Z" fill="#f0c020"/></svg>
<svg class="b" style="left:1660px;top:287px;" width="17" height="17" viewBox="0 0 17 17"><rect x="2.5" y="6.5" width="11" height="9" fill="#eee" stroke="#666"/><path d="M4 9H12M4 11H12M4 13H12" stroke="#999"/><path d="M3 7L8 2L11 5L16 3" stroke="#c09050" stroke-width="2" fill="none"/></svg>
<svg class="b" style="left:220px;top:876px;" width="56" height="60" viewBox="0 0 56 60"><path d="M18 41L11 48" stroke="#1a2ab8" stroke-width="3"/><circle cx="10.5" cy="48.5" r="4" fill="#1a2ad0"/>
<path d="M18 41V22" stroke="#2a8a2a" stroke-width="3"/><path d="M14 23L18 13L22 23Z" fill="#3aa03a"/>
<path d="M18 41L37 44" stroke="#c82020" stroke-width="3"/><path d="M36 40L45 45L36 48Z" fill="#e03030"/>
<path d="M14 3L17.5 7L21 3M17.5 7V11" stroke="#2a8a2a" stroke-width="1" fill="none"/>
<path d="M46 41L51 50M51 41L46 50" stroke="#d02020" stroke-width="1"/>
<path d="M3 48H8M8 48L3 57H8" stroke="#1a2ab8" stroke-width="1" fill="none"/></svg>
<div class="t" style="left:209px;top:957.88px;font-size:9px;color:#111;font-weight:bold;">*</div>
<div class="t" style="left:216px;top:959.50px;font-size:13px;color:#111;font-weight:bold;">Dimetric</div>
<div class="b" style="left:0px;top:974px;width:196px;height:1px;background:#a4acb8"></div>
<div class="b" style="left:196px;top:975px;width:1484px;height:1px;background:#ffffff"></div>
<div class="b" style="left:0px;top:975px;width:196px;height:1px;background:#dfe3e8"></div>
<div class="b" style="left:0px;top:976px;width:1680px;height:1px;background:#1a1a1a"></div>
<div class="b" style="left:0px;top:977px;width:1680px;height:14px;background:#e3e5e8"></div>
<div class="b" style="left:2px;top:977px;width:16px;height:14px;background:#a9acb0;border-right:1px solid #c8cacd;box-sizing:border-box"></div>
<div class="b" style="left:18px;top:977px;width:16px;height:14px;background:#a9acb0;border-right:1px solid #c8cacd;box-sizing:border-box"></div>
<div class="b" style="left:34px;top:977px;width:16px;height:14px;background:#a9acb0;border-right:1px solid #c8cacd;box-sizing:border-box"></div>
<div class="b" style="left:50px;top:977px;width:16px;height:14px;background:#a9acb0;border-right:1px solid #c8cacd;box-sizing:border-box"></div>
<svg class="b" style="left:6px;top:979px;" width="58" height="10" viewBox="0 0 58 10"><g fill="#8a8d92"><path d="M3 1V9M10 1V9L4 5Z"/><path d="M26 1V9L20 5Z"/><path d="M36 1V9L42 5Z"/><path d="M52 1V9L58 5ZM58 1V9" /></g><path d="M3 1V9M58 1V9" stroke="#8a8d92" stroke-width="1.5"/></svg>
<div class="b" style="left:0px;top:976px;width:2px;height:15px;background:#a0c8d8"></div>
<div class="b" style="left:68px;top:976px;width:56px;height:15px;background:#e8eaec;border-left:1px solid #555;box-sizing:border-box"></div>
<div class="t" style="left:-4px;width:200px;text-align:center;top:976.02px;font-size:11.5px;color:#111;font-weight:bold;">Model</div>
<div class="b" style="left:124px;top:977px;width:105px;height:14px;background:#a9abaf;border:1px solid #444;box-sizing:border-box"></div>
<div class="t" style="left:133px;top:975.84px;font-size:12px;color:#1b1b24;font-weight:normal;">Motion Study 1</div>
<div class="b" style="left:0px;top:990px;width:1680px;height:1px;background:#333"></div>
<div class="b" style="left:0px;top:991px;width:1680px;height:19px;background:#dfe1e4"></div>
<div class="t" style="left:2px;top:994.02px;font-size:11.5px;color:#111;font-weight:normal;">SolidWorks Premium 2014 x64 Edition</div>
<div class="t" style="left:1380px;top:994.02px;font-size:11.5px;color:#111;font-weight:normal;">Fully Defined</div>
<div class="t" style="left:1518px;top:994.02px;font-size:11.5px;color:#111;font-weight:normal;">MMGS</div>
<svg class="b" style="left:1573px;top:998px;" width="6" height="3" viewBox="0 0 6 3"><path d="M0 0H6L3.0 3Z" fill="#333"/></svg>
<svg class="b" style="left:1573px;top:997px;" width="6" height="4" viewBox="0 0 6 4"><path d="M0 4H6L3 0Z" fill="#333"/></svg>
<div class="b" style="left:1573px;top:997px;width:6px;height:4px;background:#dfe1e4"></div>
<svg class="b" style="left:1573px;top:997px;" width="7" height="4" viewBox="0 0 7 4"><path d="M0 4H7L3.5 0Z" fill="#333"/></svg>
<svg class="b" style="left:1595px;top:994px;" width="13" height="13" viewBox="0 0 13 13"><rect x="0.5" y="0.5" width="12" height="12" fill="#fff" stroke="#2a4a7a"/><path d="M4 4.5Q4 2.5 6.5 2.5Q9 2.5 9 4.5Q9 6 6.5 7V8.5" stroke="#1a9a1a" stroke-width="1.6" fill="none"/><rect x="5.7" y="9.5" width="1.6" height="1.6" fill="#1a9a1a"/></svg>
<svg class="b" style="left:1659px;top:992px;" width="21" height="18" viewBox="0 0 21 18"><path d="M2 11L11 2H18V9L9 17Z" fill="#f0c838" stroke="#9a7010" stroke-width="1.2"/><circle cx="14.5" cy="5.5" r="1.6" fill="#fff" stroke="#9a7010"/></svg>
<div class="b" style="left:0px;top:1010px;width:1680px;height:40px;background:linear-gradient(90deg,#1c5692 0%,#2668aa 3%,#3282c6 10%,#3d92d4 20%,#3e92d4 33%,#3486cc 45%,#2c7dc6 52%,#2a78c0 68%,#2469b2 76%,#2060aa 85%,#1b4e8e 93%,#163f76 100%)"></div>
<div class="b" style="left:0px;top:1010px;width:1680px;height:1px;background:#1e2a3a"></div>
<div class="b" style="left:0px;top:1011px;width:1680px;height:1px;background:#86bce8"></div>
<svg class="b" style="left:1190px;top:1011px;" width="90" height="39" viewBox="0 0 90 39"><path d="M14 0Q45 12 68 39H58Q36 14 4 0Z" fill="#b8d8f4" opacity="0.75"/></svg>
<svg class="b" style="left:7px;top:1011px;" width="40" height="38" viewBox="0 0 40 38"><defs><radialGradient id="orb" cx="50%" cy="40%" r="60%"><stop offset="0" stop-color="#7ab8e8"/><stop offset="0.6" stop-color="#1e5a9a"/><stop offset="1" stop-color="#0c2e5a"/></radialGradient></defs>
<circle cx="20" cy="19" r="18" fill="url(#orb)" stroke="#0a2448" stroke-width="1"/>
<path d="M9 10Q14 8 19 10V18Q14 16 9 18Z" fill="#f05a28"/><path d="M21 10Q26 12 31 10V18Q26 20 21 18Z" fill="#8cc63e"/>
<path d="M9 20Q14 18 19 20V28Q14 26 9 28Z" fill="#28a8e8"/><path d="M21 20Q26 22 31 20V28Q26 30 21 28Z" fill="#fcc014"/>
<ellipse cx="20" cy="10" rx="12" ry="6" fill="#fff" opacity="0.25"/></svg>
<div class="b" style="left:60px;top:1010px;width:58px;height:40px;background:linear-gradient(160deg,#9ec6e4 0%,#5c9fd4 40%,#3f8acb 62%,#5ba6d8 100%);border:1px solid #1c3a5c;border-radius:3px;box-sizing:border-box;box-shadow:inset 0 0 0 1px #a6d4f6"></div>
<div class="b" style="left:122px;top:1010px;width:58px;height:40px;background:linear-gradient(160deg,#9ec6e4 0%,#5c9fd4 40%,#3f8acb 62%,#5ba6d8 100%);border:1px solid #1c3a5c;border-radius:3px;box-sizing:border-box;box-shadow:inset 0 0 0 1px #a6d4f6"></div>
<div class="b" style="left:184px;top:1010px;width:58px;height:40px;background:linear-gradient(160deg,#9ec6e4 0%,#5c9fd4 40%,#3f8acb 62%,#5ba6d8 100%);border:1px solid #1c3a5c;border-radius:3px;box-sizing:border-box;box-shadow:inset 0 0 0 1px #a6d4f6"></div>
<div class="b" style="left:246px;top:1010px;width:58px;height:40px;background:linear-gradient(160deg,#9ec6e4 0%,#5c9fd4 40%,#3f8acb 62%,#5ba6d8 100%);border:1px solid #1c3a5c;border-radius:3px;box-sizing:border-box;box-shadow:inset 0 0 0 1px #a6d4f6"></div>
<div class="b" style="left:618px;top:1010px;width:58px;height:40px;background:linear-gradient(160deg,#9ec6e4 0%,#5c9fd4 40%,#3f8acb 62%,#5ba6d8 100%);border:1px solid #1c3a5c;border-radius:3px;box-sizing:border-box;box-shadow:inset 0 0 0 1px #a6d4f6"></div>
<div class="b" style="left:742px;top:1010px;width:58px;height:40px;background:linear-gradient(160deg,#9ec6e4 0%,#5c9fd4 40%,#3f8acb 62%,#5ba6d8 100%);border:1px solid #1c3a5c;border-radius:3px;box-sizing:border-box;box-shadow:inset 0 0 0 1px #a6d4f6"></div>
<div class="b" style="left:804px;top:1010px;width:58px;height:40px;background:linear-gradient(160deg,#9ec6e4 0%,#5c9fd4 40%,#3f8acb 62%,#5ba6d8 100%);border:1px solid #1c3a5c;border-radius:3px;box-sizing:border-box;box-shadow:inset 0 0 0 1px #a6d4f6"></div>
<div class="b" style="left:680px;top:1010px;width:58px;height:40px;background:linear-gradient(160deg,#c4e0f4 0%,#8cc0e6 35%,#64a8dc 60%,#8cc4ea 100%);border:1px solid #1c3a5c;border-radius:3px;box-sizing:border-box;box-shadow:inset 0 0 0 1px #a6d4f6"></div>
<svg class="b" style="left:73px;top:1014px;" width="32" height="32" viewBox="0 0 32 32"><circle cx="17" cy="17" r="11" fill="none" stroke="#2ab0ec" stroke-width="5"/><rect x="9" y="15.5" width="17" height="3.5" fill="#2ab0ec"/><rect x="17" y="19" width="12" height="5" fill="#3e8ac8" opacity="0"/><path d="M21 22H29" stroke="#3f8acb" stroke-width="4"/><circle cx="17" cy="17" r="13.3" fill="none" stroke="#0e5a9a" stroke-width="0.8"/><path d="M4 29Q0 22 10 11Q20 1 27 3Q31 5 28 10" stroke="#f4c418" stroke-width="2.8" fill="none"/></svg>
<svg class="b" style="left:135px;top:1013px;" width="32" height="33" viewBox="0 0 32 33"><circle cx="17" cy="15" r="11" fill="#1a5aa8"/><circle cx="18" cy="14" r="8" fill="#3a8ad8"/><path d="M6 11Q3 20 9 26Q16 31 24 27Q29 23 29 16Q27 23 20 24Q14 24 12 19Q15 20 17 18Q13 16 12 13Q10 10 13 6Q8 7 6 11Z" fill="#e8641a"/><path d="M8 24Q14 30 22 28Q27 26 29 20Q26 26 18 26Q12 25 8 24Z" fill="#f4a020"/><path d="M25 5Q30 9 29 16" stroke="#f4c020" stroke-width="2" fill="none"/></svg>
<svg class="b" style="left:196px;top:1013px;" width="34" height="34" viewBox="0 0 34 34"><path d="M3 2H28L31 5V32H3Z" fill="#2a3ec8" stroke="#1a2a9a" stroke-width="1"/><rect x="9" y="2" width="15" height="10" fill="#c8ccd8"/><rect x="17" y="4" width="4" height="6" fill="#2a3ec8"/><rect x="6" y="16" width="22" height="15" fill="#f4f0f0"/><path d="M8 20H26M8 24H26M8 28H18" stroke="#c03030" stroke-width="1.2"/><text x="19" y="31" font-size="6" font-family="Liberation Sans" fill="#333">64</text></svg>
<svg class="b" style="left:259px;top:1014px;" width="32" height="32" viewBox="0 0 32 32"><rect x="14" y="9" width="15" height="13" fill="#fff" stroke="#0a6ac8" stroke-width="1.5"/><path d="M14.5 10L21.5 16L28.5 10" stroke="#0a6ac8" stroke-width="1.5" fill="none"/><path d="M2 5L18 2V30L2 27Z" fill="#0a6ac8"/><ellipse cx="10" cy="16" rx="3.6" ry="5" fill="none" stroke="#fff" stroke-width="2.4"/></svg>
<svg class="b" style="left:321px;top:1013px;" width="34" height="35" viewBox="0 0 34 35"><path d="M1 6L14 1L31 5L30 26L16 31L2 27Z" fill="#c01010"/><path d="M1 6L14 1L31 5L16 10Z" fill="#f24040"/><path d="M1 6L16 10L16 31L2 27Z" fill="#e01818"/><path d="M16 10L31 5L30 26L16 31Z" fill="#9a0c0c"/>
<text x="3.5" y="26" font-size="18" font-weight="bold" font-family="Liberation Sans" fill="#fff" transform="scale(0.75,1)">S</text><text x="22" y="25" font-size="17" font-weight="bold" font-family="Liberation Sans" fill="#fff" transform="scale(0.72,1)">W</text></svg>
<svg class="b" style="left:383px;top:1013px;" width="34" height="35" viewBox="0 0 34 35"><path d="M1 6L14 1L31 5L30 26L16 31L2 27Z" fill="#c01010"/><path d="M1 6L14 1L31 5L16 10Z" fill="#f24040"/><path d="M1 6L16 10L16 31L2 27Z" fill="#e01818"/><path d="M16 10L31 5L30 26L16 31Z" fill="#9a0c0c"/>
<text x="3.5" y="26" font-size="18" font-weight="bold" font-family="Liberation Sans" fill="#fff" transform="scale(0.75,1)">S</text><text x="22" y="25" font-size="17" font-weight="bold" font-family="Liberation Sans" fill="#fff" transform="scale(0.72,1)">W</text></svg>
<svg class="b" style="left:445px;top:1013px;" width="34" height="35" viewBox="0 0 34 35"><path d="M1 6L14 1L31 5L30 26L16 31L2 27Z" fill="#c01010"/><path d="M1 6L14 1L31 5L16 10Z" fill="#f24040"/><path d="M1 6L16 10L16 31L2 27Z" fill="#e01818"/><path d="M16 10L31 5L30 26L16 31Z" fill="#9a0c0c"/>
<text x="3.5" y="26" font-size="18" font-weight="bold" font-family="Liberation Sans" fill="#fff" transform="scale(0.75,1)">S</text><text x="22" y="25" font-size="17" font-weight="bold" font-family="Liberation Sans" fill="#fff" transform="scale(0.72,1)">W</text></svg>
<svg class="b" style="left:507px;top:1013px;" width="34" height="35" viewBox="0 0 34 35"><path d="M1 6L14 1L31 5L30 26L16 31L2 27Z" fill="#c01010"/><path d="M1 6L14 1L31 5L16 10Z" fill="#f24040"/><path d="M1 6L16 10L16 31L2 27Z" fill="#e01818"/><path d="M16 10L31 5L30 26L16 31Z" fill="#9a0c0c"/>
<text x="3.5" y="26" font-size="18" font-weight="bold" font-family="Liberation Sans" fill="#fff" transform="scale(0.75,1)">S</text><text x="22" y="25" font-size="17" font-weight="bold" font-family="Liberation Sans" fill="#fff" transform="scale(0.72,1)">W</text><text x="10" y="33" font-size="9" font-weight="bold" font-family="Liberation Sans" fill="#fff" stroke="#333" stroke-width="1.6" paint-order="stroke">2015</text></svg>
<svg class="b" style="left:694px;top:1013px;" width="34" height="35" viewBox="0 0 34 35"><path d="M1 6L14 1L31 5L30 26L16 31L2 27Z" fill="#c01010"/><path d="M1 6L14 1L31 5L16 10Z" fill="#f24040"/><path d="M1 6L16 10L16 31L2 27Z" fill="#e01818"/><path d="M16 10L31 5L30 26L16 31Z" fill="#9a0c0c"/>
<text x="3.5" y="26" font-size="18" font-weight="bold" font-family="Liberation Sans" fill="#fff" transform="scale(0.75,1)">S</text><text x="22" y="25" font-size="17" font-weight="bold" font-family="Liberation Sans" fill="#fff" transform="scale(0.72,1)">W</text></svg>
<svg class="b" style="left:569px;top:1014px;" width="32" height="32" viewBox="0 0 32 32"><path d="M8 4L28 8L24 30L4 26Z" fill="#e8f4f8" stroke="#7a9aa8" stroke-width="0.8"/><path d="M8 4L20 6L8 28Q4 27 4 26Z" fill="#4ab0c8" opacity="0.8"/><path d="M10 4L12 2M14 5L16 3M18 6L20 4M22 7L24 5" stroke="#555" stroke-width="1"/></svg>
<svg class="b" style="left:631px;top:1013px;" width="32" height="34" viewBox="0 0 32 34"><circle cx="16" cy="17" r="13" fill="#18a8e8"/><path d="M21 11Q18 8 14 9Q10 10 11 14Q12 17 17 18Q21 19 21 22Q20 26 15 25Q11 25 10 22" stroke="#fff" stroke-width="3.2" fill="none"/></svg>
<svg class="b" style="left:755px;top:1014px;" width="32" height="32" viewBox="0 0 32 32"><path d="M3 6H12L14 8H29V29H3Z" fill="#e8c050"/><path d="M3 11H29V29H3Z" fill="#f8e498"/><rect x="6" y="4" width="4" height="3" fill="#3ab03a"/><rect x="13" y="5" width="4" height="3" fill="#d03030"/><rect x="20" y="6" width="4" height="3" fill="#3a8ad0"/><path d="M8 29V20H24V29" stroke="#6ab8e8" stroke-width="3" fill="none"/></svg>
<svg class="b" style="left:816px;top:1014px;" width="34" height="32" viewBox="0 0 34 32"><rect x="14" y="6" width="16" height="20" fill="#fff" stroke="#2a4a9a"/><path d="M17 10H27M17 13H27M17 16H27M17 19H27M17 22H27" stroke="#2a4a9a" stroke-width="1.2"/><path d="M2 5L18 2V30L2 27Z" fill="#2a5aa8"/><text x="3.5" y="20" font-size="10" font-weight="bold" font-family="Liberation Sans" fill="#fff">W</text></svg>
<div class="t" style="left:1480px;top:1021.02px;font-size:11.5px;color:#e8f0f8;font-weight:normal;">SL</div>
<svg class="b" style="left:1510px;top:1029px;" width="8" height="5" viewBox="0 0 8 5"><path d="M0 4.5H8L4 0Z" fill="#fff"/></svg>
<svg class="b" style="left:1530px;top:1023px;" width="16" height="16" viewBox="0 0 16 16"><path d="M1.5 1V15" stroke="#fff" stroke-width="1.4"/><path d="M2 2H8L9 4H15L13 7L15 10H9L8 8H2Z" fill="#fff"/></svg>
<svg class="b" style="left:1555px;top:1023px;" width="17" height="16" viewBox="0 0 17 16"><rect x="5.5" y="4.5" width="10" height="7" fill="#1a2a5a" stroke="#fff" stroke-width="1.2"/><path d="M10 12V14M7 15H13M2 2V12M1 2H4V5H1" stroke="#fff" stroke-width="1.2" fill="none"/></svg>
<svg class="b" style="left:1578px;top:1025px;" width="16" height="14" viewBox="0 0 16 14"><path d="M1 4H4L8 1V13L4 10H1Z" fill="#fff"/><path d="M10 4Q12 7 10 10M12 2Q15 7 12 12" stroke="#fff" stroke-width="1.2" fill="none"/></svg>
<div class="t" style="left:1619px;top:1015.02px;font-size:11.5px;color:#fff;font-weight:normal;">15:57</div>
<div class="t" style="left:1609px;top:1032.02px;font-size:11.5px;color:#fff;font-weight:normal;">19.1.2015</div>
<div class="b" style="left:1666px;top:1011px;width:14px;height:38px;background:linear-gradient(90deg,#2a5a9a,#4a7ab8);border:1px solid #6a9ad0;box-sizing:border-box"></div>
<svg class="b" style="left:5px;top:2px;" width="30" height="26" viewBox="0 0 30 26"><g fill="none" stroke="#fff" stroke-linecap="round"><path d="M11.5 3.5H17.5Q20.5 3.8 19 6.5Q17.5 9 13 10.2" stroke-width="1.8"/><path d="M7.5 12.6H14.5Q16.8 13 15 15.8Q12 20.5 4.5 22.5L9.2 15.5" stroke-width="1.7"/><path d="M24.5 9.6H19Q16.2 10 17.5 13Q19 15.5 22 17Q23.5 19.5 15 20.4" stroke-width="1.9"/></g></svg>
<div class="t" style="left:35px;top:9px;font-size:14px;line-height:18px;color:#fff;transform:scaleX(0.89);transform-origin:0 0;font-style:italic"><b>SOLID</b>WORKS</div>
<svg class="b" style="left:472px;top:6px;" width="15" height="18" viewBox="0 0 15 18"><path d="M1.5 1.5H10L13.5 5V16.5H1.5Z" fill="#eef3f8" stroke="#5a6a7a" stroke-width="1"/><path d="M10 1.5V5H13.5" fill="#cfd8e2" stroke="#5a6a7a" stroke-width="1"/></svg>
<svg class="b" style="left:494px;top:15px;" width="6" height="3" viewBox="0 0 6 3"><path d="M0 0H6L3.0 3Z" fill="#333"/></svg>
<svg class="b" style="left:507px;top:6px;" width="18" height="18" viewBox="0 0 18 18"><path d="M1.5 6H6L7.5 7.5H14V16H1.5Z" fill="#e8b830" stroke="#9a7010" stroke-width="1"/><path d="M3 10H17L14 16H1.5Z" fill="#f8d868" stroke="#9a7010" stroke-width="1"/><path d="M10 3Q14 2 14 7M12 5L14 8L16.5 5" stroke="#2aa02a" stroke-width="1.8" fill="none"/></svg>
<svg class="b" style="left:530px;top:15px;" width="6" height="3" viewBox="0 0 6 3"><path d="M0 0H6L3.0 3Z" fill="#333"/></svg>
<svg class="b" style="left:543px;top:6px;" width="18" height="18" viewBox="0 0 18 18"><rect x="1.5" y="1.5" width="15" height="15" rx="1" fill="#2a4ac8" stroke="#1a2a80"/><rect x="4" y="2" width="10" height="6" fill="#f0f4f8"/><rect x="5" y="11" width="8" height="5.5" fill="#c8d0e0"/><rect x="6.5" y="12" width="2" height="3.5" fill="#2a4ac8"/></svg>
<svg class="b" style="left:566px;top:15px;" width="6" height="3" viewBox="0 0 6 3"><path d="M0 0H6L3.0 3Z" fill="#333"/></svg>
<svg class="b" style="left:579px;top:6px;" width="17" height="18" viewBox="0 0 17 18"><path d="M5 1.5H12L13 6H4Z" fill="#bcd8f0" stroke="#7a8a9a" stroke-width="0.8"/><path d="M1.5 7H15.5L16 14H1Z" fill="#d8dadc" stroke="#555" stroke-width="1"/><rect x="4" y="12" width="9" height="4" fill="#fff" stroke="#555" stroke-width="0.8"/><rect x="3" y="9" width="11" height="1.5" fill="#777"/></svg>
<svg class="b" style="left:602px;top:15px;" width="6" height="3" viewBox="0 0 6 3"><path d="M0 0H6L3.0 3Z" fill="#333"/></svg>
<svg class="b" style="left:615px;top:6px;" width="18" height="18" viewBox="0 0 18 18"><path d="M5 13Q3 8 7 5Q12 3 15 7Q16 11 12 15" stroke="#a8aaae" stroke-width="2.6" fill="none"/><path d="M2 9L5 2L9 8Z" fill="#a8aaae"/></svg>
<svg class="b" style="left:639px;top:15px;" width="6" height="3" viewBox="0 0 6 3"><path d="M0 0H6L3.0 3Z" fill="#a8aaae"/></svg>
<div class="b" style="left:648px;top:4px;width:37px;height:24px;background:linear-gradient(90deg,#b9bbbe 0 23px,#d9dbde 23px);border:1px solid #8a8c90;box-sizing:border-box"></div>
<svg class="b" style="left:654px;top:7px;" width="12" height="17" viewBox="0 0 12 17"><path d="M1.5 1.5V14L4.5 11L7 16L9 15L6.5 10H10.5Z" fill="#fff" stroke="#222" stroke-width="1.1" stroke-linejoin="round"/></svg>
<svg class="b" style="left:675px;top:15px;" width="6" height="3" viewBox="0 0 6 3"><path d="M0 0H6L3.0 3Z" fill="#333"/></svg>
<svg class="b" style="left:692px;top:6px;" width="9" height="19" viewBox="0 0 9 19"><rect x="0.5" y="0.5" width="8" height="18" rx="4" fill="#222"/><circle cx="4.5" cy="5" r="2.6" fill="#d02020"/><circle cx="4.5" cy="13.5" r="2.6" fill="#20b030"/></svg>
<svg class="b" style="left:710px;top:6px;" width="18" height="18" viewBox="0 0 18 18"><rect x="2.5" y="7.5" width="12" height="9" fill="#f4f4f4" stroke="#555"/><path d="M4.5 10H12.5M4.5 12.5H12.5M4.5 15H12.5" stroke="#999"/><path d="M3 8L9 2L12 5L17 3" stroke="#c89050" stroke-width="2.4" fill="none"/></svg>
<svg class="b" style="left:733px;top:6px;" width="18" height="18" viewBox="0 0 18 18"><rect x="1.5" y="1.5" width="15" height="15" fill="#f4f8fc" stroke="#4a5a7a"/><path d="M7 5H14M7 9H14M7 13H14" stroke="#4a5a8a" stroke-width="1.2"/><rect x="3" y="4" width="2" height="2" fill="#4a5a8a"/><rect x="3" y="8" width="2" height="2" fill="#4a5a8a"/><path d="M2.5 12.5L4 14.5L7 10.5" stroke="#20a020" stroke-width="1.6" fill="none"/></svg>
<svg class="b" style="left:757px;top:15px;" width="6" height="3" viewBox="0 0 6 3"><path d="M0 0H6L3.0 3Z" fill="#333"/></svg>
<svg class="b" style="left:1580px;top:6px;" width="12" height="14" viewBox="0 0 12 14"><path d="M2.5 5Q2.5 1.5 6 1.5Q9.5 1.5 9.5 4.5Q9.5 6.5 6.5 8V9.5" stroke="#333" stroke-width="2.6" fill="none"/><path d="M2.5 5Q2.5 1.5 6 1.5Q9.5 1.5 9.5 4.5Q9.5 6.5 6.5 8V9.5" stroke="#fff" stroke-width="0.9" fill="none"/><rect x="5" y="11" width="3" height="2.5" fill="#fff" stroke="#333"/></svg>
<svg class="b" style="left:1601px;top:13px;" width="6" height="3" viewBox="0 0 6 3"><path d="M0 0H6L3.0 3Z" fill="#333"/></svg>
<svg class="b" style="left:1616px;top:14px;" width="13" height="7" viewBox="0 0 13 7"><rect x="0.8" y="0.8" width="11.4" height="5.4" rx="1" fill="#fff" stroke="#444" stroke-width="1.5"/></svg>
<svg class="b" style="left:1637px;top:6px;" width="18" height="15" viewBox="0 0 18 15"><rect x="6.7" y="1.2" width="9.6" height="8.6" fill="#fff" stroke="#444" stroke-width="1.4"/><rect x="11" y="3.5" width="3" height="4" fill="none" stroke="#444" stroke-width="1"/><rect x="0.7" y="5.2" width="10.6" height="8.6" fill="#fff" stroke="#444" stroke-width="1.4"/><rect x="2.7" y="7.2" width="6.6" height="4.6" fill="none" stroke="#444" stroke-width="1"/></svg>
<svg class="b" style="left:1661px;top:7px;" width="15" height="14" viewBox="0 0 15 14"><path d="M2 2L13 12M13 2L2 12" stroke="#444" stroke-width="3.8" stroke-linecap="round"/><path d="M2 2L13 12M13 2L2 12" stroke="#fff" stroke-width="1.5" stroke-linecap="round"/></svg>
<svg class="b" style="left:1538px;top:5px;" width="19" height="19" viewBox="0 0 19 19"><circle cx="11" cy="7.5" r="5.5" fill="#f0f6fc" stroke="#5a7a9a" stroke-width="1.6"/><path d="M7 11.5L2 17" stroke="#5a8ac0" stroke-width="2.6"/></svg>
<svg class="b" style="left:1562px;top:14px;" width="6" height="3" viewBox="0 0 6 3"><path d="M0 0H6L3.0 3Z" fill="#222"/></svg>
<svg class="b" style="left:30px;top:43px;" width="17" height="16" viewBox="0 0 17 16"><path d="M0.8 4L3.5 2.5L15.5 10.5V13.5L13 15.5L0.8 8.5Z" fill="#e2e4e6" stroke="#9a9ea4" stroke-width="1.2" stroke-linejoin="round"/><path d="M0.8 4L13 11.5V15.5M13 11.5L15.5 10.5" stroke="#9a9ea4" stroke-width="1" fill="none"/><path d="M6.5 5.5V2.5L10 1L14 3.5V9" fill="#dcdfe2" stroke="#9a9ea4" stroke-width="1.1"/></svg>
<svg class="b" style="left:104px;top:35px;" width="17" height="17" viewBox="0 0 17 17"><path d="M2.5 7.5Q2.5 3 6.5 2.5" stroke="#1a3ac8" stroke-width="1.8" fill="none"/><path d="M5.5 0.5L9 2.5L5.5 4.8Z" fill="#1a3ac8"/><path d="M0.8 9.5H4.5L5.5 8.5H9.5V16.5H0.8Z" fill="#e0a820" stroke="#a07810" stroke-width="0.8"/><path d="M1 16.5L3 11.5H12L9.5 16.5Z" fill="#f8d868" stroke="#a07810" stroke-width="0.8"/><path d="M8 3.5L11.5 1L16 3V10L12.5 12.5L8 10Z" fill="#f2e040" stroke="#7a6010" stroke-width="1"/><path d="M11 5L15.5 3V9.5L12 11.5Z" fill="#22b822"/><circle cx="13.3" cy="6.5" r="1.3" fill="#90f090"/></svg>
<svg class="b" style="left:160px;top:43px;" width="17" height="17" viewBox="0 0 17 17"><g transform="rotate(-42 8.5 8.5)"><rect x="5" y="-1" width="7" height="19" rx="3.5" fill="none" stroke="#222" stroke-width="1.4"/><path d="M7.2 14V3.5A1.3 1.3 0 0 1 9.8 3.5V12.5" stroke="#222" stroke-width="1.1" fill="none"/></g></svg>
<svg class="b" style="left:214px;top:37px;" width="15" height="15" viewBox="0 0 15 15"><path d="M1.5 1V6.5M1.5 2H4L5.5 3.5L4 5H1.5" stroke="#e8a010" stroke-width="2" fill="none"/><path d="M9.5 1V6.5M9.5 2H12L13.5 3.5L12 5H9.5" stroke="#20b020" stroke-width="2" fill="none"/><path d="M1.5 8.5V14M1.5 9.5H4L5.5 11L4 12.5H1.5" stroke="#20b020" stroke-width="2" fill="none"/><path d="M9.5 8.5V14M9.5 9.5H12L13.5 11L12 12.5H9.5" stroke="#20b020" stroke-width="2" fill="none"/></svg>
<svg class="b" style="left:278px;top:42px;" width="17" height="17" viewBox="0 0 17 17"><rect x="1" y="3" width="15" height="13" rx="1" fill="#f6d060" stroke="#b07a10" stroke-width="1"/><rect x="3" y="8" width="4" height="7" fill="#ccc" stroke="#333" stroke-width="0.9"/><rect x="7" y="11" width="7" height="3" fill="#bbb" stroke="#333" stroke-width="0.8"/><path d="M12 0.5L13 3.5H16L13.5 5.3L14.5 8.5L12 6.5L9.5 8.5L10.5 5.3L8 3.5H11Z" fill="#fff060" stroke="#c09010" stroke-width="0.6"/></svg>
<svg class="b" style="left:342px;top:36px;" width="18" height="15" viewBox="0 0 18 15"><path d="M1.5 2V13M1.5 3H6V7H1.5M6 5H9" stroke="#e8b010" stroke-width="2.4" fill="none"/><path d="M7 5Q11 0 17 5Q11 12 7 8Z" fill="#fff" stroke="#222" stroke-width="1.2"/><circle cx="11" cy="6" r="2" fill="none" stroke="#222" stroke-width="1"/></svg>
<svg class="b" style="left:420px;top:42px;" width="17" height="18" viewBox="0 0 17 18"><path d="M3 4Q6 0 10 3" stroke="#1a3ac8" stroke-width="1.6" fill="none"/><path d="M1 5L4 2.5V6Z" fill="#1a3ac8"/><path d="M1.5 9L5 6.5L9 9V12L11 13L8 16L1.5 11.5Z" fill="#f0d030" stroke="#a08010" stroke-width="1"/><rect x="10" y="5" width="4.5" height="4.5" fill="#fff" stroke="#111" stroke-width="1.4"/><rect x="11.5" y="10" width="4.5" height="4.5" fill="#fff" stroke="#111" stroke-width="1.4"/></svg>
<svg class="b" style="left:489px;top:36px;" width="17" height="17" viewBox="0 0 17 17"><path d="M1.5 4L4.5 1.5H15.5V13L12.5 15.5H1.5Z" fill="#28b828" stroke="#145a14" stroke-width="1"/><path d="M1.5 4H12.5V15.5M12.5 4L15.5 1.5" stroke="#145a14" stroke-width="1" fill="none"/><rect x="3" y="2.5" width="9" height="4" fill="#f4e050"/><rect x="5.5" y="5" width="4.5" height="10" fill="#888" stroke="#333" stroke-width="0.8"/></svg>
<svg class="b" style="left:547px;top:36px;" width="18" height="17" viewBox="0 0 18 17"><path d="M2 2L15 15" stroke="#20a020" stroke-width="1" stroke-dasharray="2 1.5"/><path d="M4 9L9 4L14 9L9 14Z" fill="#f0e040" stroke="#7a6a10" stroke-width="1"/><path d="M7 8L9 10" stroke="#333" stroke-width="1.2"/><path d="M13 1V6M10.5 3.5H15.5M11 1.5L15 5.5M15 1.5L11 5.5" stroke="#20a020" stroke-width="1"/></svg>
<svg class="b" style="left:605px;top:43px;" width="18" height="16" viewBox="0 0 18 16"><circle cx="11" cy="9" r="5" fill="#f2c030" stroke="#8a6a10" stroke-width="1.2" stroke-dasharray="2 1"/><circle cx="11" cy="9" r="1.6" fill="#fff" stroke="#6a5010"/><circle cx="4.5" cy="12" r="3.3" fill="#fff" stroke="#222" stroke-width="1.6"/><path d="M3 2L5 4M5 1V5M7 2L3 6" stroke="#f06010" stroke-width="1.2"/></svg>
<svg class="b" style="left:660px;top:42px;" width="18" height="17" viewBox="0 0 18 17"><rect x="1.5" y="1.5" width="12" height="11" fill="#f4f6fa" stroke="#5a6a8a"/><rect x="1.5" y="1.5" width="12" height="2.5" fill="#6a8ad0"/><path d="M5 10L10 6L16.5 10V14L12 16.5L5 12.5Z" fill="#f0e040" stroke="#6a5a10" stroke-width="1"/><path d="M10 8L15 11V14L10 11Z" fill="#28b828"/></svg>
<svg class="b" style="left:721px;top:42px;" width="18" height="17" viewBox="0 0 18 17"><path d="M2 4Q6 1 10 2Q12 4 9 6L4 8Z" fill="#e8c080" stroke="#8a6a30" stroke-width="0.8"/><path d="M11 10L15 6" stroke="#111" stroke-width="2"/><rect x="12" y="1" width="5" height="5" fill="#28b828" stroke="#145a14" stroke-width="0.8"/><path d="M4 10H9V13H15V16H2V13H4Z" fill="#f0d030" stroke="#7a6010" stroke-width="0.8"/></svg>
<svg class="b" style="left:775px;top:43px;" width="18" height="16" viewBox="0 0 18 16"><path d="M3 1L8 6L14 6" stroke="#a0a4aa" stroke-width="1.6" fill="none"/><rect x="12" y="2" width="5" height="5" fill="#dfe2e5" stroke="#a0a4aa" stroke-width="0.9"/><path d="M2 15H9V12H13V9" stroke="#a0a4aa" stroke-width="1.6" fill="none"/></svg>
<svg class="b" style="left:835px;top:43px;" width="17" height="17" viewBox="0 0 17 17"><path d="M5 1L16 6L14 10L3 5Z" fill="#f0e060" stroke="#8a7a20" stroke-width="0.8"/><path d="M6 2.5V4.5M9 4V6M12 5.5V7.5" stroke="#555" stroke-width="0.8"/><path d="M1 8L12 14" stroke="#2a80d8" stroke-width="2.4"/><path d="M10 11L15 15.5L9 15.5Z" fill="#2a80d8"/></svg>
<svg class="b" style="left:897px;top:43px;" width="18" height="17" viewBox="0 0 18 17"><rect x="4" y="1.5" width="12" height="13" fill="#e8f0e0" stroke="#555" stroke-width="0.9"/><path d="M1 4H7M0 7H6M1 10H6" stroke="#333" stroke-width="0.9"/><path d="M6 4L10 2L14 7" fill="none" stroke="#28a028" stroke-width="1.4"/><path d="M11.5 7L17.5 16.5H5.5Z" fill="#f8d020" stroke="#222" stroke-width="1"/><path d="M11.5 10V13.5M11.5 14.5V15.5" stroke="#111" stroke-width="1.2"/></svg>
<svg class="b" style="left:962px;top:43px;" width="15" height="15" viewBox="0 0 15 15"><rect x="3.5" y="0.5" width="11" height="12" fill="#f8f8f8" stroke="#444"/><rect x="0.5" y="2.5" width="11" height="12" fill="#fff" stroke="#222"/><rect x="2.5" y="4.5" width="7" height="8" fill="#c8b070"/><path d="M3 12L6 7L9 12Z" fill="#d03020"/></svg>
<svg class="b" style="left:5px;top:137px;" width="19" height="17" viewBox="0 0 19 17"><path d="M0.8 4L3.5 2.5L15.5 10.5V13.5L12.5 16L0.8 8.5Z" fill="#f6e040" stroke="#111" stroke-width="1.4" stroke-linejoin="round"/><path d="M0.8 4L12.5 12V16" stroke="#111" stroke-width="1.1" fill="none"/><path d="M7.5 4L11.5 1.5L16 4V10.5L12 13L7.5 10.5Z" fill="#2ec42e" stroke="#111" stroke-width="1.3" stroke-linejoin="round"/><path d="M7.5 4L12 6.5L16 4M12 6.5V13" stroke="#0a4a0a" stroke-width="0.9" fill="none"/></svg>
<svg class="b" style="left:33px;top:137px;" width="18" height="17" viewBox="0 0 18 17"><rect x="2.5" y="5.5" width="13" height="10" fill="#f4f6fa" stroke="#4a5a7a"/><rect x="4" y="8" width="2.5" height="2.5" fill="#e8a020"/><rect x="4" y="12" width="2.5" height="2" fill="#888"/><path d="M8 9H13M8 13H13" stroke="#7a8aa0" stroke-width="1.2"/><path d="M4 6L9 1.5L12 4L17 2.5" stroke="#d8a060" stroke-width="2.2" fill="none"/></svg>
<svg class="b" style="left:61px;top:136px;" width="18" height="19" viewBox="0 0 18 19"><path d="M2 1V17M2 6H8M2 14H8" stroke="#555" stroke-width="1"/><rect x="6.5" y="2.5" width="5" height="5" rx="1" fill="#f2d030" stroke="#333"/><rect x="10.5" y="11" width="5" height="5" rx="1" fill="#f2d030" stroke="#333"/><path d="M9 8V13H11" stroke="#333" fill="none"/></svg>
<svg class="b" style="left:89px;top:136px;" width="18" height="18" viewBox="0 0 18 18"><circle cx="9" cy="9" r="8" fill="#2aa02a"/><path d="M9 9V1A8 8 0 0 1 17 9Z" fill="#e02828"/><path d="M9 9H1A8 8 0 0 1 9 1Z" fill="#2a6ad8"/><path d="M9 9H17A8 8 0 0 1 9 17Z" fill="#f0c818"/><circle cx="11.5" cy="5" r="2.5" fill="#111"/></svg>
<svg class="b" style="left:446px;top:6px;" width="14" height="17" viewBox="0 0 14 17"><circle cx="9" cy="5" r="3.8" fill="#e8e8ea" stroke="#444" stroke-width="1"/><path d="M4 8Q6 5 9 8Q11 11 8 12Z" fill="#d8d8da" stroke="#444" stroke-width="1"/><path d="M5 11L1 15" stroke="#333" stroke-width="1.2"/></svg>
</body></html>
